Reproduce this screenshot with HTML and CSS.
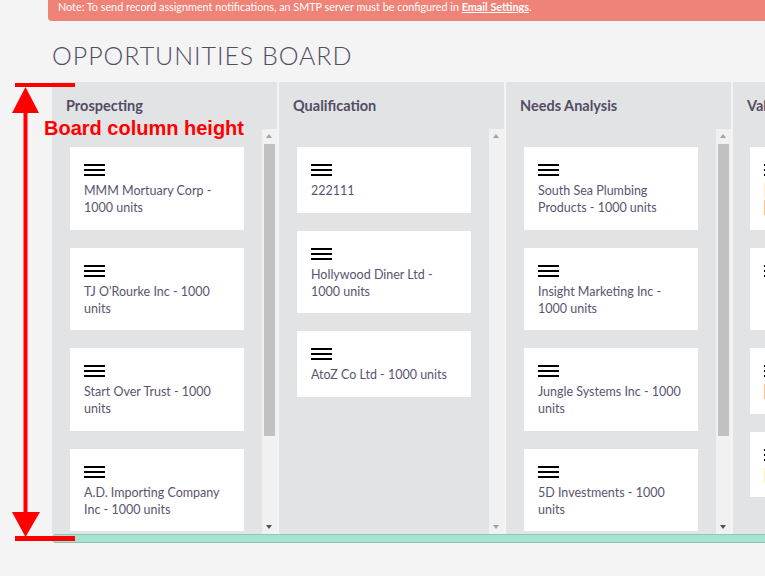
FILE: index.html
```html
<!DOCTYPE html>
<html>
<head>
<meta charset="utf-8">
<link rel="stylesheet" href="styles.css">
</head>
<body>
<div class="note">Note: To send record assignment notifications, an SMTP server must be configured in <a class="note-link">Email Settings</a>.</div>
<h1 class="title">OPPORTUNITIES BOARD</h1>
<div class="board">
  <div class="col">
    <div class="col-head">Prospecting</div>
    <div class="col-body">
      <div class="list">
        <div class="card"><div class="burger"><i></i><i></i><i></i></div><div class="card-text">MMM Mortuary Corp - 1000 units</div></div>
        <div class="card"><div class="burger"><i></i><i></i><i></i></div><div class="card-text">TJ O'Rourke Inc - 1000 units</div></div>
        <div class="card"><div class="burger"><i></i><i></i><i></i></div><div class="card-text">Start Over Trust - 1000 units</div></div>
        <div class="card"><div class="burger"><i></i><i></i><i></i></div><div class="card-text">A.D. Importing Company Inc - 1000 units</div></div>
      </div>
      <div class="sbar"><span class="arr up"></span><span class="thumb"></span><span class="arr down on"></span></div>
    </div>
  </div>
  <div class="col">
    <div class="col-head">Qualification</div>
    <div class="col-body">
      <div class="list">
        <div class="card"><div class="burger"><i></i><i></i><i></i></div><div class="card-text">222111</div></div>
        <div class="card"><div class="burger"><i></i><i></i><i></i></div><div class="card-text">Hollywood Diner Ltd - 1000 units</div></div>
        <div class="card"><div class="burger"><i></i><i></i><i></i></div><div class="card-text">AtoZ Co Ltd - 1000 units</div></div>
      </div>
      <div class="sbar"><span class="arr up"></span><span class="gap"></span><span class="arr down"></span></div>
    </div>
  </div>
  <div class="col">
    <div class="col-head">Needs Analysis</div>
    <div class="col-body">
      <div class="list">
        <div class="card"><div class="burger"><i></i><i></i><i></i></div><div class="card-text">South Sea Plumbing Products - 1000 units</div></div>
        <div class="card"><div class="burger"><i></i><i></i><i></i></div><div class="card-text">Insight Marketing Inc - 1000 units</div></div>
        <div class="card"><div class="burger"><i></i><i></i><i></i></div><div class="card-text">Jungle Systems Inc - 1000 units</div></div>
        <div class="card"><div class="burger"><i></i><i></i><i></i></div><div class="card-text">5D Investments - 1000 units</div></div>
      </div>
      <div class="sbar"><span class="arr up"></span><span class="thumb"></span><span class="arr down on"></span></div>
    </div>
  </div>
  <div class="col col-edge">
    <div class="col-head">Value Proposition</div>
    <div class="col-body">
      <div class="list">
        <div class="card"><div class="burger"><i></i><i></i><i></i></div><div class="card-text"><span class="hl-y">Overdue</span><br><span class="hl-o">Closing</span></div></div>
        <div class="card"><div class="burger"><i></i><i></i><i></i></div><div class="card-text">&nbsp;<br>&nbsp;</div></div>
        <div class="card"><div class="burger"><i></i><i></i><i></i></div><div class="card-text"><span class="hl-o">Closing</span></div></div>
        <div class="card"><div class="burger"><i></i><i></i><i></i></div><div class="card-text"><span class="hl-y">Overdue</span></div></div>
      </div>
      <div class="sbar"><span class="arr up"></span><span class="thumb"></span><span class="arr down on"></span></div>
    </div>
  </div>
</div>
<div class="board-foot"></div>

<svg class="annot" width="100" height="560" viewBox="0 0 100 560">
  <rect x="15" y="83" width="60" height="4" fill="#ff0000"/>
  <polygon points="25.5,87 12,113 39,113" fill="#ff0000"/>
  <rect x="23.5" y="110" width="4" height="406" fill="#ff0000"/>
  <polygon points="25.5,537 12,512 40,512" fill="#ff0000"/>
  <rect x="15" y="536" width="60" height="5" fill="#ff0000"/>
</svg>
<div class="annot-label">Board column height</div>
</body>
</html>
```
FILE: styles.css
```css
html, body {
  margin: 0;
  padding: 0;
  background: #f4f4f4;
  font-family: Lato, "Open Sans", sans-serif;
  overflow: hidden;
}

.note {
  margin-left: 48px;
  height: 21px;
  background: #f08377;
  border-bottom-left-radius: 4px;
  color: #ffffff;
  font-size: 10.8px;
  line-height: 14px;
  padding-left: 10px;
  white-space: nowrap;
  overflow: hidden;
  box-sizing: border-box;
}

.note-link {
  font-weight: 700;
  text-decoration: underline;
  color: #ffffff;
}

.title {
  margin: 19px 0 12px 52px;
  font-size: 25px;
  line-height: 30px;
  font-weight: 300;
  letter-spacing: 0.95px;
  color: #534d64;
  white-space: nowrap;
}

.board {
  display: flex;
  gap: 2px;
  margin-left: 52px;
  height: 452px;
  overflow: hidden;
}

.col {
  flex: 0 0 225px;
  display: flex;
  flex-direction: column;
  background: #e2e3e5;
}

.col-edge .card {
  margin-left: -1px;
}

.col-head {
  height: 47px;
  padding-left: 14px;
  box-sizing: border-box;
  font-size: 14.5px;
  font-weight: 700;
  line-height: 47px;
  color: #534d64;
  white-space: nowrap;
}

.col-body {
  flex: 1;
  display: flex;
  min-height: 0;
}

.list {
  flex: 1;
  overflow: hidden;
  padding: 18px 18px 0 18px;
  display: flex;
  flex-direction: column;
  gap: 18px;
}

.card {
  flex: 0 0 auto;
  background: #ffffff;
  padding: 14px 14px 13.5px 14px;
}

.burger {
  height: 21px;
  width: 21px;
  padding-top: 3px;
  box-sizing: border-box;
  display: flex;
  flex-direction: column;
  gap: 3px;
}

.burger i {
  display: block;
  height: 2px;
  width: 21px;
  background: #000000;
}

.card-text {
  font-size: 12.5px;
  line-height: 17px;
  color: #5a5470;
}

.hl-y { background: #fdf0c0; color: #fdf0c0; }
.hl-o { background: #f9c48a; color: #f9c48a; }

.sbar {
  flex: 0 0 15px;
  background: #f1f1f1;
  display: flex;
  flex-direction: column;
  align-items: center;
}

.arr {
  flex: 0 0 15px;
  width: 15px;
  position: relative;
}

.arr::after {
  content: "";
  position: absolute;
  left: 4px;
  width: 0;
  height: 0;
  border-left: 3.5px solid transparent;
  border-right: 3.5px solid transparent;
}

.arr.up::after {
  top: 5px;
  border-bottom: 4px solid #a3a3a3;
}

.arr.down::after {
  top: 6px;
  border-top: 4px solid #a3a3a3;
}

.arr.down.on::after {
  border-top-color: #505050;
}

.thumb {
  display: block;
  width: 11px;
  height: 292px;
  background: #c1c1c1;
}

.gap, .thumb + .arr {
  margin-top: auto;
}

.gap { flex: 1; }

.board-foot {
  margin-left: 52px;
  height: 9px;
  background: #a3e4d2;
  border-top: 1px solid #8dc7b6;
  border-bottom: 1px solid #8fbfb1;
  border-top-left-radius: 4px;
  border-bottom-left-radius: 4px;
  box-sizing: border-box;
}

.annot {
  position: absolute;
  left: 0;
  top: 0;
}

.annot-label {
  position: absolute;
  left: 44px;
  top: 116px;
  font-family: "Liberation Sans", Arial, sans-serif;
  font-weight: 700;
  font-size: 20px;
  line-height: 24px;
  color: #ff0000;
  white-space: nowrap;
}
```
